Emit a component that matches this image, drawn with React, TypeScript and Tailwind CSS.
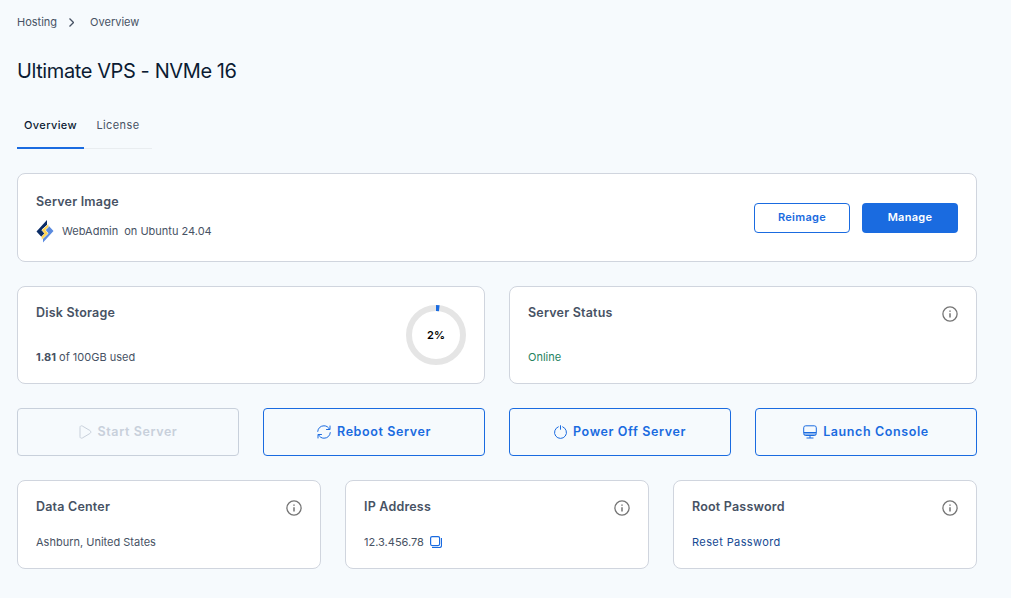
import type { ReactNode } from 'react'

interface CardProps {
  title: string
  className: string
  info?: boolean
  children: ReactNode
}

function InfoIcon() {
  return (
    <svg className="h-4 w-4 shrink-0" viewBox="0 0 16 16" fill="none">
      <circle cx="8" cy="8" r="7.1" stroke="#757575" strokeWidth="1.3" />
      <path d="M8 7.2v4.2M8 4.4v1.4" stroke="#757575" strokeWidth="1.5" />
    </svg>
  )
}

function PlayIcon() {
  return (
    <svg className="h-[14px] w-[13px]" viewBox="0 0 13 14" fill="none" stroke="currentColor">
      <path d="M1 2.4C1 1 2 .5 3.3 1l7.6 4.5c1.3.9 1.3 2.1 0 3L3.3 13C2 13.5 1 13 1 11.6z" />
    </svg>
  )
}

function RebootIcon() {
  return (
    <svg className="h-[14px] w-[14px]" viewBox="0 0 14 14" fill="none" stroke="currentColor" strokeLinecap="round" strokeLinejoin="round">
      <path d="M.7 6.4C1 3 3.7.8 7 .8c2.500 0 4.300 1.200 5.500 3.400M13 1v3.500H9.500" />
      <path d="M13.300 7.600C13 11 10.300 13.200 7 13.200c-2.500 0-4.300-1.200-5.500-3.400M1 13V9.500h3.500" />
    </svg>
  )
}

function PowerIcon() {
  return (
    <svg className="h-[14px] w-[13px]" viewBox="0 0 13 14" fill="none" stroke="currentColor" strokeLinecap="round">
      <path d="M4.300 1.800a6 6 0 1 0 4.400 0M6.500.7v3.600" />
    </svg>
  )
}

function ConsoleIcon() {
  return (
    <svg className="h-[14px] w-[14px]" viewBox="0 0 14 14" fill="none" stroke="currentColor">
      <path d="M1 7.500h12V9q0 1.500-1.500 1.500h-9Q1 10.500 1 9z" fill="currentColor" fillOpacity=".5" stroke="none" />
      <rect x=".7" y=".8" width="12.600" height="9.700" rx="2" />
      <path d="M1 7.500h12M7 10.500v2.500M3.500 13h7" />
    </svg>
  )
}

function CopyIcon() {
  return (
    <svg className="h-3 w-3" viewBox="0 0 12 12" fill="none" stroke="#1a6be0">
      <rect x=".6" y=".6" width="9" height="9" rx="1.500" strokeWidth="1.200" />
      <path d="M11.500 2v7.500q0 2-2 2H2" strokeWidth="1.100" />
    </svg>
  )
}

function WebAdminLogo() {
  return (
    <svg className="h-[23px] w-[18px]" viewBox="0 0 18 23">
      <path d="M11 0v5L6 9.500l4.500 5L6.500 18 .5 11.500z" fill="#0a2c66" />
      <path d="M7 22.500v-5l5-4.500L7.500 8.500 12 5l5.500 6z" fill="#5b8bdf" />
      <path d="M12.500 4v3L9.500 10l2.700 3.500L5.500 20v-3.500l3-3L5.700 10z" fill="#ffd34e" stroke="#fff" strokeWidth=".5" />
    </svg>
  )
}

function Card({ title, className, info, children }: CardProps) {
  return (
    <section className={`rounded-lg border border-[#d0d5de] bg-white px-[18px] pt-4 ${className}`}>
      <div className="flex h-5 justify-between">
        <h2 className="text-[12.5px] leading-5 font-semibold tracking-[0.2px] text-[#475264]">{title}</h2>
        {info && <div className="pt-[3px]"><InfoIcon /></div>}
      </div>
      {children}
    </section>
  )
}

const actions = [
  { label: 'Start Server', icon: <PlayIcon />, disabled: true },
  { label: 'Reboot Server', icon: <RebootIcon />, disabled: false },
  { label: 'Power Off Server', icon: <PowerIcon />, disabled: false },
  { label: 'Launch Console', icon: <ConsoleIcon />, disabled: false },
]

export default function App() {
  const usedPercent = 2

  return (
    <div className="min-h-screen bg-[#f6fafd] pt-3 pr-[34px] pl-[17px] font-['Inter',sans-serif] text-[11px] text-[#475264]">
      {/* Breadcrumb */}
      <nav className="flex h-5 items-center leading-5">
        <a href="#">Hosting</a>
        <svg className="mr-4 ml-3 h-[9px] w-[5px]" viewBox="0 0 5 9" fill="none" stroke="currentColor" strokeWidth="1.300">
          <path d="M.5.5l4 4-4 4" />
        </svg>
        <span>Overview</span>
      </nav>

      <h1 className="mt-6 text-[20px] leading-[30px] tracking-[-0.4px] text-[#0b1b33]">Ultimate VPS - NVMe 16</h1>

      {/* Tabs */}
      <div className="mt-[29px] flex h-[34px] tracking-[0.4px]">
        <button className="h-[34px] w-[67px] border-b-2 border-[#1a6be0] pb-3 font-medium text-[#0b1b33]">Overview</button>
        <button className="h-[34px] w-[68px] border-b border-[#e9edf0] pb-[13px]">License</button>
      </div>

      <div className="mt-6 flex flex-col gap-6">
        <div className="flex h-[89px] items-center justify-between rounded-lg border border-[#d0d5de] bg-white px-[18px]">
          <div>
            <h2 className="text-[12.5px] leading-5 font-semibold tracking-[0.2px]">Server Image</h2>
            <div className="mt-2 flex h-6 items-center">
              <WebAdminLogo />
              <span className="ml-2">WebAdmin</span>
              <span className="ml-1.5">on Ubuntu 24.04</span>
            </div>
          </div>
          <div className="flex gap-3 text-[11px] font-semibold tracking-[0.3px]">
            <button className="h-[30px] w-24 rounded border border-[#1a6be0] text-[#1a6be0]">Reimage</button>
            <button className="h-[30px] w-24 rounded bg-[#1a6be0] text-white">Manage</button>
          </div>
        </div>

        <div className="grid grid-cols-2 gap-6">
          <section className="flex h-[98px] items-center justify-between rounded-lg border border-[#d0d5de] bg-white px-[18px]">
            <div className="flex h-full flex-col pt-4">
              <h2 className="text-[12.5px] leading-5 font-semibold tracking-[0.2px]">Disk Storage</h2>
              <p className="mt-6 leading-5"><b>1.81</b> of 100GB used</p>
            </div>
            <div className="grid place-items-center">
              <svg className="col-start-1 row-start-1 h-[60px] w-[60px]" viewBox="0 0 60 60" fill="none" strokeWidth="6">
                <circle cx="30" cy="30" r="27" stroke="#e5e5e5" />
                <circle cx="30" cy="30" r="27" stroke="#1a6be0" pathLength="100" strokeDasharray={`${usedPercent} 100`} transform="rotate(-90 30 30)" />
              </svg>
              <span className="col-start-1 row-start-1 font-semibold text-black">{usedPercent}%</span>
            </div>
          </section>
          <Card title="Server Status" className="h-[98px]" info>
            <p className="mt-6 leading-5 text-[#26835f]">Online</p>
          </Card>
        </div>

        <div className="grid grid-cols-4 gap-6">
          {actions.map((action) => (
            <button
              key={action.label}
              disabled={action.disabled}
              className={`flex h-12 items-center justify-center gap-1.5 rounded border text-[12.5px] font-semibold tracking-[0.6px] ${
                action.disabled ? 'border-[#c8d0db] text-[#c8d0db]' : 'border-[#1a6be0] text-[#1a6be0]'
              }`}
            >
              {action.icon}
              {action.label}
            </button>
          ))}
        </div>

        <div className="grid grid-cols-3 gap-6">
          <Card title="Data Center" className="h-[89px]" info>
            <p className="mt-[15px] leading-5">Ashburn, United States</p>
          </Card>
          <Card title="IP Address" className="h-[89px]" info>
            <p className="mt-[15px] flex items-center gap-1.5 leading-5">
              12.3.456.78
              <CopyIcon />
            </p>
          </Card>
          <Card title="Root Password" className="h-[89px]" info>
            <a href="#" className="mt-[15px] block leading-5 tracking-[0.4px] text-[#164a93]">Reset Password</a>
          </Card>
        </div>
      </div>
    </div>
  )
}
